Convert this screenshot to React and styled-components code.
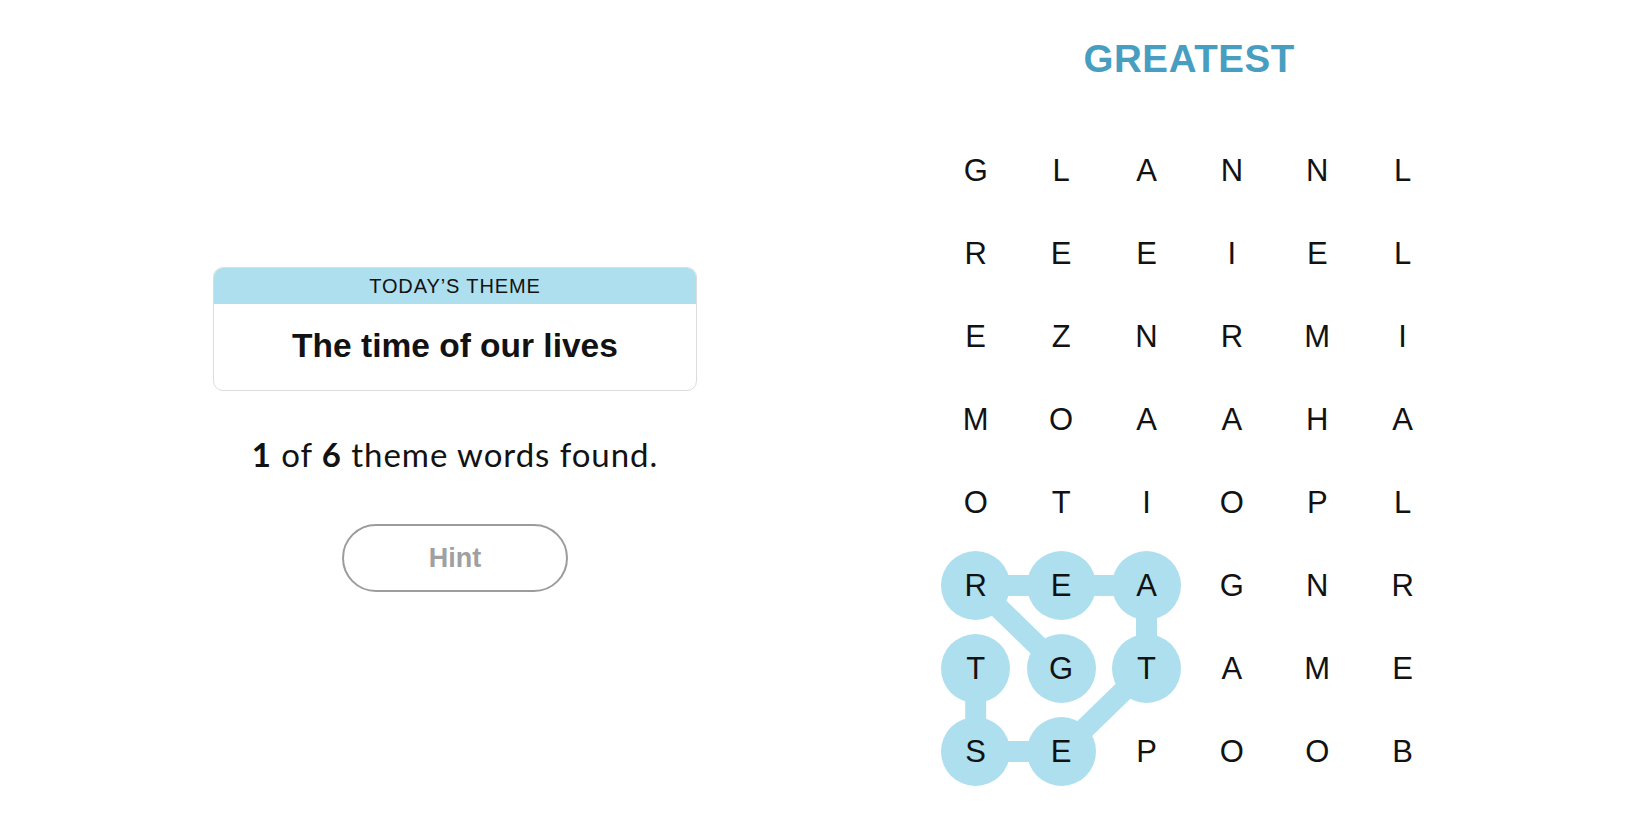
import React from "react";
import styled, { createGlobalStyle } from "styled-components";

const GlobalStyle = createGlobalStyle`
  html, body {
    margin: 0;
    padding: 0;
    background: #ffffff;
  }
  body {
    font-family: "Liberation Sans", Arial, sans-serif;
    color: #121212;
  }
`;

const HIGHLIGHT = "#aedfee";
const COL_W = 85.4;
const ROW_H = 83;

const Page = styled.div`
  display: grid;
  grid-template-columns: 910px 1fr;
  width: 1650px;
  height: 825px;
`;

const InfoColumn = styled.section`
  display: flex;
  flex-direction: column;
  align-items: center;
  padding-top: 267px;
`;

const ThemeCard = styled.div`
  width: 482px;
  border: 1px solid #dcdcdc;
  border-radius: 10px;
  overflow: hidden;
  background: #fff;
`;

const ThemeHeader = styled.div`
  height: 36px;
  line-height: 36px;
  background: ${HIGHLIGHT};
  text-align: center;
  font-size: 20px;
  letter-spacing: 0.9px;
  color: #121212;
`;

const ThemeBody = styled.div`
  height: 86px;
  display: flex;
  align-items: center;
  justify-content: center;
  font-size: 33.5px;
  font-weight: 700;
  color: #121212;
  padding-bottom: 2px;
  box-sizing: border-box;
`;

const Progress = styled.p`
  margin: 44px 0 0;
  font-family: Lato, "Liberation Sans", sans-serif;
  font-size: 33px;
  line-height: 38px;
  letter-spacing: 0.95px;
  color: #121212;

  b {
    font-weight: 700;
  }
`;

const HintButton = styled.button`
  margin-top: 51px;
  width: 226px;
  height: 68px;
  border: 2.5px solid #9c9c9c;
  border-radius: 34px;
  background: #fff;
  font-family: "Liberation Sans", Arial, sans-serif;
  font-size: 27px;
  font-weight: 700;
  color: #a0a0a0;
  cursor: default;
`;

const BoardColumn = styled.section`
  display: flex;
  flex-direction: column;
  align-items: flex-start;
  padding-left: 23px;
`;

const BoardWrap = styled.div`
  width: ${COL_W * 6}px;
  display: flex;
  flex-direction: column;
  align-items: center;
`;

const Title = styled.h1`
  margin: 40px 0 0;
  font-size: 38.5px;
  line-height: 1;
  font-weight: 700;
  letter-spacing: 0.6px;
  color: #479ec0;
  text-align: center;
`;

const Board = styled.div`
  position: relative;
  margin-top: 50.5px;
  display: grid;
  grid-template-columns: repeat(6, ${COL_W}px);
  grid-auto-rows: ${ROW_H}px;
`;

const Links = styled.svg`
  position: absolute;
  inset: 0;
  width: 100%;
  height: 100%;
  z-index: 0;
  pointer-events: none;
`;

const Cell = styled.div`
  position: relative;
  z-index: 1;
  display: flex;
  align-items: center;
  justify-content: center;
`;

const Letter = styled.span`
  width: 69px;
  height: 69px;
  border-radius: 50%;
  display: flex;
  align-items: center;
  justify-content: center;
  font-size: 31px;
  line-height: 1;
  color: #121212;
  background: ${({ $found }) => ($found ? HIGHLIGHT : "transparent")};
`;

const rows = [
  "GLANNL",
  "REEIEL",
  "EZNRMI",
  "MOAAHA",
  "OTIOPL",
  "REAGNR",
  "TGTAME",
  "SEPOOB",
];

// G R E A T E S T, as [row, col]
const path = [
  [6, 1],
  [5, 0],
  [5, 1],
  [5, 2],
  [6, 2],
  [7, 1],
  [7, 0],
  [6, 0],
];

const isFound = (r, c) => path.some(([pr, pc]) => pr === r && pc === c);
const cx = (c) => c * COL_W + COL_W / 2;
const cy = (r) => r * ROW_H + ROW_H / 2;

export default function App() {
  return (
    <>
      <GlobalStyle />
      <Page>
        <InfoColumn>
          <ThemeCard>
            <ThemeHeader>TODAY’S THEME</ThemeHeader>
            <ThemeBody>The time of our lives</ThemeBody>
          </ThemeCard>
          <Progress>
            <b>1</b> of <b>6</b> theme words found.
          </Progress>
          <HintButton>Hint</HintButton>
        </InfoColumn>

        <BoardColumn>
          <BoardWrap>
            <Title>GREATEST</Title>
            <Board>
              <Links>
                <polyline
                  points={path.map(([r, c]) => `${cx(c)},${cy(r)}`).join(" ")}
                  fill="none"
                  stroke={HIGHLIGHT}
                  strokeWidth="21"
                  strokeLinejoin="round"
                  strokeLinecap="round"
                />
              </Links>
              {rows.map((row, r) =>
                row.split("").map((ch, c) => (
                  <Cell key={`${r}-${c}`}>
                    <Letter $found={isFound(r, c)}>{ch}</Letter>
                  </Cell>
                ))
              )}
            </Board>
          </BoardWrap>
        </BoardColumn>
      </Page>
    </>
  );
}
